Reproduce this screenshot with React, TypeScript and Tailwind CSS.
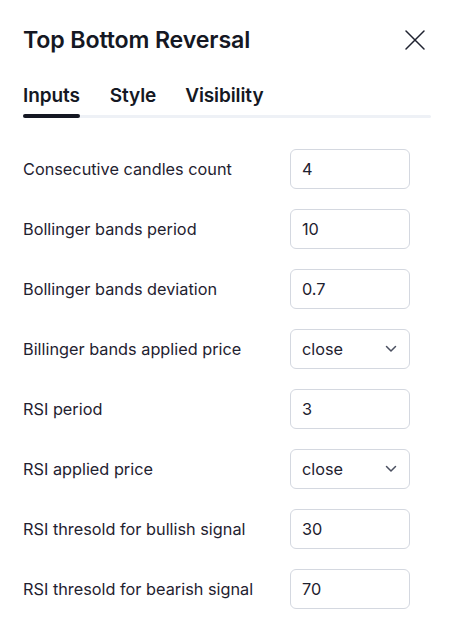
import React from "react";

const rows: { label: string; value: string; select?: boolean }[] = [
  { label: "Consecutive candles count", value: "4" },
  { label: "Bollinger bands period", value: "10" },
  { label: "Bollinger bands deviation", value: "0.7" },
  { label: "Billinger bands applied price", value: "close", select: true },
  { label: "RSI period", value: "3" },
  { label: "RSI applied price", value: "close", select: true },
  { label: "RSI thresold for bullish signal", value: "30" },
  { label: "RSI thresold for bearish signal", value: "70" },
];

export default function App() {
  return (
    <div
      className="w-[452px] h-[625px] bg-white overflow-hidden text-[#111827]"
      style={{ fontFamily: "Inter, 'Noto Sans', sans-serif" }}
    >
      <div className="flex items-center justify-between pl-[23px] pr-[26px] pt-[26px]">
        <h1 className="text-[23.2px] leading-[28px] font-semibold tracking-[-0.15px] text-[#151823]">
          Top Bottom Reversal
        </h1>
        <svg width="22" height="22" viewBox="0 0 22 22" className="text-[#1f2230]">
          <path d="M2 2 L20 20 M20 2 L2 20" stroke="currentColor" strokeWidth="1.5" strokeLinecap="round" />
        </svg>
      </div>
      <div className="pl-[23px] pr-[21px] mt-[28px]">
        <div className="flex text-[19px] leading-[28px] font-semibold tracking-[-0.1px] text-[#151823]">
          <span>Inputs</span>
          <span className="ml-[30px]">Style</span>
          <span className="ml-[29px]">Visibility</span>
        </div>
        <div className="mt-[4px] relative h-[4px]">
          <div className="absolute left-0 right-0 top-[0.5px] h-[3px] bg-[#eef1f6] rounded-full" />
          <div className="absolute left-0 top-0 h-[4px] w-[57px] bg-[#151823] rounded-full" />
        </div>
      </div>
      <div className="mt-[21px] pl-[23px]">
        {rows.map((r) => (
          <div key={r.label} className="flex items-center h-[60px]">
            <div className="w-[267px] text-[16.3px] text-[#1f2230]">{r.label}</div>
            <div className="w-[120px] h-[40px] border border-[#d4d8e0] rounded-[6px] flex items-center justify-between pl-[11px] pr-[12px] text-[16.3px] text-[#1f2230]">
              <span>{r.value}</span>
              {r.select && (
                <svg width="12" height="8" viewBox="0 0 12 8">
                  <path d="M1.5 1.5 L6 6 L10.5 1.5" fill="none" stroke="#4b5060" strokeWidth="1.5" strokeLinecap="round" strokeLinejoin="round" />
                </svg>
              )}
            </div>
          </div>
        ))}
      </div>
    </div>
  );
}
